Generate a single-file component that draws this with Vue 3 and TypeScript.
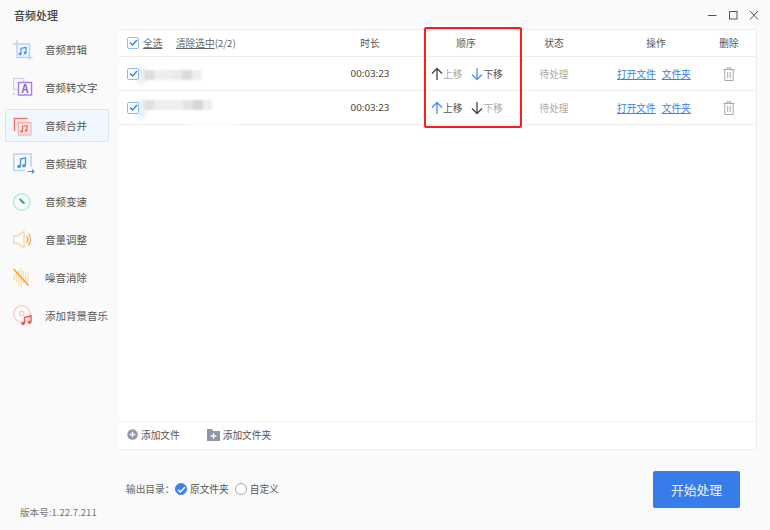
<script setup lang="ts">
interface Row { up: boolean; blurKind: number }
const rows: Row[] = [
  { up: false, blurKind: 1 },
  { up: true, blurKind: 2 },
]
const menu = ['音频剪辑', '音频转文字', '音频合并', '音频提取', '音频变速', '音量调整', '噪音消除', '添加背景音乐']
</script>

<template>
  <div class="win">
    <header class="titlebar">
      <span class="title">音频处理</span>
      <div class="winbtns">
        <svg width="12" height="12" viewBox="0 0 12 12"><path d="M2 6.500h8.500" stroke="#555" fill="none"/></svg>
        <svg width="12" height="12" viewBox="0 0 12 12"><rect x="2.500" y="2.500" width="7.500" height="7.500" stroke="#555" fill="none"/></svg>
        <svg width="12" height="12" viewBox="0 0 12 12"><path d="M2 2l8 8.500M10 2l-8 8.500" stroke="#555" fill="none"/></svg>
      </div>
    </header>
    <div class="body">
      <aside class="side">
        <nav class="menu">
          <div v-for="(m, i) in menu" :key="m" class="item" :class="{ active: i === 2 }">
            <span class="ico">
              <svg v-if="i === 0" width="22" height="22" viewBox="0 0 22 22" fill="none">
                <rect x="4" y="5" width="12" height="13" fill="#eef6ff"/>
                <path d="M4 1v17.500h15.500M0 5h16.500v16" stroke="#b4d4f9" stroke-width="1.400"/>
                <path d="M8 15V9.500l5-1.200V14" stroke="#4f93ee" stroke-width="1.200"/>
                <circle cx="7" cy="15" r="1.400" fill="#4f93ee"/><circle cx="12" cy="14" r="1.400" fill="#4f93ee"/>
              </svg>
              <svg v-else-if="i === 1" width="22" height="22" viewBox="0 0 22 22" fill="none">
                <rect x="0.700" y="1.500" width="10" height="11" stroke="#d9cbf6" stroke-width="1.300"/>
                <path d="M0 15.500v3l2.500-1.500z" fill="#d9cbf6"/>
                <rect x="5.500" y="5.500" width="13" height="12.500" fill="#fff" stroke="#a582ea" stroke-width="1.500"/>
                <text x="12" y="15.500" text-anchor="middle" class="a-glyph">A</text>
              </svg>
              <svg v-else-if="i === 2" width="22" height="22" viewBox="0 0 22 22" fill="none">
                <path d="M1.500 16V3.500h13" stroke="#f4746e" stroke-width="1.500"/>
                <path d="M4 15V6h12" stroke="#fbc9c6" stroke-width="1"/>
                <rect x="5.500" y="7.500" width="12.500" height="12.500" fill="#fde3e1" stroke="#f7b1ac" stroke-width="1.200"/>
                <path d="M9.500 16.500V11.500l4.500-1v5" stroke="#ef6a63" stroke-width="1.200"/>
                <circle cx="8.500" cy="16.500" r="1.300" fill="#ef6a63"/><circle cx="13" cy="15.500" r="1.300" fill="#ef6a63"/>
              </svg>
              <svg v-else-if="i === 3" width="22" height="22" viewBox="0 0 22 22" fill="none">
                <path d="M18 14V1H.800v16.500H12" stroke="#b4d4f9" stroke-width="1.500"/>
                <path d="M7.500 13.500V6l5-1.200v8" stroke="#4c92ef" stroke-width="1.400"/>
                <circle cx="6" cy="13.500" r="1.800" fill="#4c92ef"/><circle cx="11" cy="12.800" r="1.800" fill="#4c92ef"/>
                <path d="M14.500 18.500H21m-2-2l2 2-2 2" stroke="#4c92ef" stroke-width="1.100"/>
              </svg>
              <svg v-else-if="i === 4" width="22" height="22" viewBox="0 0 22 22" fill="none">
                <circle cx="8.800" cy="11" r="8.200" stroke="#b5ebd6" stroke-width="1.500"/>
                <path d="M6 8.500l1.300-1.300 5.200 5-2.600.7z" fill="#23b27c"/>
              </svg>
              <svg v-else-if="i === 5" width="22" height="22" viewBox="0 0 22 22" fill="none">
                <path d="M.700 6.500h4.300L11 2.500v16.500L5 14.500H.700z" stroke="#fbd5a3" stroke-width="1.300"/>
                <path d="M13.600 7c1.300 2 1.300 5 0 7M15.600 4.500c2.300 3.500 2.300 8.500 0 12" stroke="#f9a63c" stroke-width="1.300"/>
              </svg>
              <svg v-else-if="i === 6" width="22" height="22" viewBox="0 0 22 22" fill="none">
                <path d="M1 7v6M3.300 5v10M5.600 2.500v16M8 1v19M10.300 4v12M12.600 6v9M15 5v10" stroke="#fcdcae" stroke-width="1.300"/>
                <path d="M.500 2l15 16.500" stroke="#f8a02e" stroke-width="1.500"/>
              </svg>
              <svg v-else width="22" height="22" viewBox="0 0 22 22" fill="none">
                <circle cx="9" cy="9" r="8.300" stroke="#fbc8c8" stroke-width="1.300"/>
                <circle cx="8.700" cy="8.500" r="2.200" stroke="#fbc8c8" stroke-width="1.300"/>
                <path d="M11.500 18.500v-6l6.500-1.500v6" stroke="#ef5350" stroke-width="1.400"/>
                <circle cx="10" cy="18.500" r="1.700" fill="#ef5350"/><circle cx="16.500" cy="17.300" r="1.700" fill="#ef5350"/>
              </svg>
            </span>
            <span class="label">{{ m }}</span>
          </div>
        </nav>
        <div class="version">版本号:1.22.7.211</div>
      </aside>
      <main class="main">
        <section class="panel">
          <div class="grid head">
            <div class="namecell">
              <span class="check"><svg width="9" height="9" viewBox="0 0 9 9"><path d="M1 4.500l2.500 2.500L8 2" stroke="#3b82ec" stroke-width="1.500" fill="none"/></svg></span>
              <a class="plain first">全选</a>
              <a class="plain">清除选中</a><span class="count">(2/2)</span>
            </div>
            <div class="c">时长</div>
            <div class="c">顺序</div>
            <div class="c">状态</div>
            <div class="c opshead">操作</div>
            <div class="c">删除</div>
          </div>
          <div v-for="(r, idx) in rows" :key="idx" class="grid row">
            <div class="namecell">
              <span class="wash"></span>
              <span class="check"><svg width="9" height="9" viewBox="0 0 9 9"><path d="M1 4.500l2.500 2.500L8 2" stroke="#3b82ec" stroke-width="1.500" fill="none"/></svg></span>
              <span class="smudge" :class="r.blurKind === 1 ? 'one' : 'two'"></span>
              <span v-if="r.blurKind === 2" class="cover"></span>
            </div>
            <div class="c time">00:03:23</div>
            <div class="order">
              <span class="mv">
                <svg width="12" height="14" viewBox="0 0 12 14" fill="none"><path d="M6 13V1.500M1 6.500l5-5 5 5" :stroke="r.up ? '#4a8ff0' : '#444'" stroke-width="1.300"/></svg>
                <span :class="r.up ? 'on' : 'off'">上移</span>
              </span>
              <span class="mv">
                <svg width="12" height="14" viewBox="0 0 12 14" fill="none"><path d="M6 1v11.500M1 7.500l5 5 5-5" :stroke="r.up ? '#444' : '#4a8ff0'" stroke-width="1.300"/></svg>
                <span :class="r.up ? 'off' : 'on'">下移</span>
              </span>
            </div>
            <div class="c pending">待处理</div>
            <div class="ops"><a>打开文件</a><a>文件夹</a></div>
            <div class="c trash">
              <svg width="12" height="14" viewBox="0 0 12 14" fill="none" stroke="#a8a8a8">
                <path d="M0.500 2.500h11M4 2.500V.8h4v1.700M1.800 2.500v11h8.400v-11M4.700 5v6M7.300 5v6"/>
              </svg>
            </div>
          </div>
          <div class="fill"></div>
          <div class="panelfoot">
            <span class="add">
              <svg width="11" height="11" viewBox="0 0 12 12"><circle cx="6" cy="6" r="5.700" fill="#8e96a8"/><path d="M6 3v6M3 6h6" stroke="#fff" stroke-width="1.500"/></svg>
              添加文件
            </span>
            <span class="add">
              <svg width="13" height="12" viewBox="0 0 13 12"><path d="M0 0h5l1 2h7v10H0z" fill="#8e96a8"/><path d="M6.500 4.200v5.600M3.700 7h5.600" stroke="#fff" stroke-width="1.400"/></svg>
              添加文件夹
            </span>
          </div>
        </section>
        <div class="bottom">
          <div class="output">
            <span class="olabel">输出目录：</span>
            <span class="radio on-radio"><svg width="9" height="9" viewBox="0 0 9 9"><path d="M1 4.700l2.300 2.300L8 2.200" stroke="#fff" stroke-width="1.500" fill="none"/></svg></span>
            <span class="rtext">原文件夹</span>
            <span class="radio"></span>
            <span class="rtext">自定义</span>
          </div>
          <button class="start">开始处理</button>
        </div>
      </main>
    </div>
    <div class="redbox"></div>
  </div>
</template>

<style>
html, body { margin: 0; background: #fafafa; }
</style>

<style scoped>
.win {
  position: relative;
  width: 770px;
  height: 530px;
  background: #fafafa;
  color: #555;
  font-family: "Noto Sans CJK SC", "Noto Sans", sans-serif;
  font-size: 9.7px;
  display: flex;
  flex-direction: column;
  overflow: hidden;
}
.titlebar {
  height: 29px;
  flex: none;
  display: flex;
  align-items: center;
  justify-content: space-between;
  padding: 0 10px 0 14px;
}
.title { font-size: 11px; font-weight: 500; color: #444; }
.winbtns { display: flex; gap: 9px; }
.body { flex: 1; display: flex; min-height: 0; }
.side {
  width: 119px;
  flex: none;
  box-sizing: border-box;
  padding: 4px 10px 11px 5px;
  display: flex;
  flex-direction: column;
}
.menu { display: flex; flex-direction: column; gap: 5px; }
.item {
  height: 33px;
  box-sizing: border-box;
  border: 1px solid transparent;
  border-radius: 2px;
  display: flex;
  align-items: center;
  padding-left: 7px;
  width: 104px;
}
.item.active { background: #f1f7ff; border-color: #d3e5fb; }
.ico { width: 32px; flex: none; display: flex; }
.a-glyph { fill: #8a5ce0; font-size: 11px; font-weight: 700; }
.label { font-size: 10.5px; white-space: nowrap; color: #555; }
.version { margin-top: auto; padding-left: 15px; font-size: 9.6px; color: #777; white-space: nowrap; }
.main { flex: 1; display: flex; flex-direction: column; min-width: 0; }
.panel {
  width: 638px;
  height: 421px;
  box-sizing: border-box;
  background: #fff;
  border: 1px solid #eee;
  border-width: 1px 1px 1px 0;
  display: flex;
  flex-direction: column;
  flex: none;
}
.grid {
  display: grid;
  grid-template-columns: 221px 60px 132px 44px 134px 38px;
  align-items: center;
  border-bottom: 1px solid #eeeeee;
  box-sizing: border-box;
}
.head { height: 27px; padding-bottom: 1px; }
.row { height: 34px; }
.namecell { display: flex; align-items: center; padding-left: 8px; position: relative; height: 100%; }
.check {
  width: 12px;
  height: 12px;
  box-sizing: border-box;
  border: 1px solid #8cbaf5;
  border-radius: 2px;
  background: #fff;
  display: flex;
  align-items: center;
  justify-content: center;
  flex: none;
  position: relative;
  z-index: 1;
}
.plain { text-decoration: underline; color: #666; }
.first { margin: 0 13.500px 0 4px; }
.count { color: #666; }
.c { text-align: center; white-space: nowrap; }
.opshead { padding-left: 26px; }
.time { color: #444; font-family: "Noto Sans", sans-serif; font-size: 9.8px; }
.order { display: flex; align-items: center; gap: 9px; padding-left: 31px; }
.mv { display: flex; align-items: center; }
.on { color: #555; }
.off { color: #aaa; }
.pending { color: #aaa; }
.ops { display: flex; gap: 6px; padding-left: 41px; white-space: nowrap; }
.ops a { color: #3b82ec; text-decoration: underline; }
.trash { display: flex; justify-content: center; }
.wash {
  position: absolute;
  left: 18px;
  top: 9px;
  width: 8px;
  height: 18px;
  background: #e4f0fe;
  filter: blur(2px);
}
.smudge { position: absolute; filter: blur(1px); pointer-events: none; height: 10px; }
.smudge.one {
  left: 25px; top: 13px; width: 58px;
  background: linear-gradient(90deg, #dcdcdc 0 17%, #eeeeee 17% 50%, #e9e9e9 50% 66%, #dcdcdc 66% 83%, #efefef 83% 100%);
}
.smudge.two {
  left: 25px; top: 9px; width: 68px;
  background: linear-gradient(90deg, #dfdfdf 0 15%, #eeeeee 15% 58%, #e3e3e3 58% 72%, #d6d6d6 72% 87%, #eeeeee 87% 100%);
}
.cover {
  position: absolute;
  left: 68px;
  top: 28px;
  width: 46px;
  height: 6px;
  background: #fff;
  filter: blur(1.500px);
}
.fill { flex: 1; }
.panelfoot {
  height: 28px;
  flex: none;
  box-sizing: border-box;
  border-top: 1px solid #f1f1f1;
  display: flex;
  align-items: center;
  gap: 27px;
  padding: 0 0 2px 8px;
}
.add { display: flex; align-items: center; gap: 3px; color: #555; white-space: nowrap; }
.bottom {
  flex: 1;
  display: flex;
  align-items: flex-start;
  justify-content: space-between;
  width: 621px;
}
.output { display: flex; align-items: center; margin: 32px 0 0 7px; white-space: nowrap; }
.olabel { color: #666; width: 49px; flex: none; }
.radio {
  width: 12px;
  height: 12px;
  box-sizing: border-box;
  border: 1px solid #aaa;
  border-radius: 50%;
  background: #fff;
  margin-right: 3px;
  display: flex;
  align-items: center;
  justify-content: center;
}
.on-radio { background: #3b82ec; border-color: #3b82ec; }
.rtext { margin-right: 6px; color: #555; }
.start {
  width: 87px;
  height: 37px;
  margin-top: 21px;
  border: 0;
  border-radius: 2px;
  background: #377ce9;
  color: #eef4ff;
  font-family: inherit;
  font-size: 12.8px;
  padding: 0;
}
.redbox {
  position: absolute;
  left: 424px;
  top: 27px;
  width: 98px;
  height: 101px;
  box-sizing: border-box;
  border: 2px solid #fb1d1d;
  border-radius: 2px;
  pointer-events: none;
}
</style>
